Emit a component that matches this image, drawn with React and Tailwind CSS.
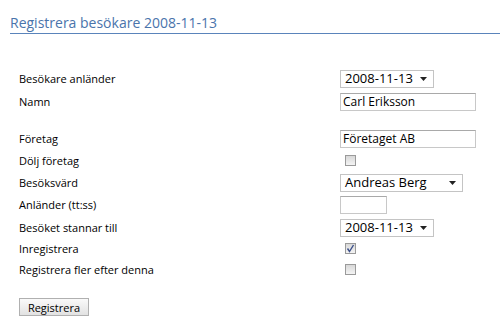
import React from "react";

const font = { fontFamily: '"Open Sans", "Liberation Sans", sans-serif' };

function Arrow() {
  return (
    <svg width="7" height="4" viewBox="0 0 7 4" className="shrink-0">
      <path d="M0 0 H7 L3.5 4 Z" fill="#222" />
    </svg>
  );
}

function Select({ value, w }) {
  return (
    <div className={`h-[18px] ${w} border border-[#c4c4c4] bg-white flex items-center justify-between pl-[4px] pr-[6px] text-[13px] text-black leading-none`}>
      <span>{value}</span>
      <Arrow />
    </div>
  );
}

function Input({ value, w }) {
  return (
    <div className={`h-[18px] ${w} border border-[#c8c8c8] border-t-[#a9a9a9] bg-white flex items-center pl-[2px] text-[12px] text-black leading-none`}>
      {value}
    </div>
  );
}

function Check({ checked }) {
  return (
    <div className="ml-[5px] w-[11px] h-[11px] border border-[#9a9a9a] bg-gradient-to-b from-[#d8d8d8] to-[#f4f4f4] flex items-center justify-center">
      {checked && (
        <svg width="9" height="9" viewBox="0 0 9 9">
          <path d="M1.5 4.5 L3.5 7.5 L7.5 1" stroke="#3b4f8a" strokeWidth="1.4" fill="none" />
        </svg>
      )}
    </div>
  );
}

function Row({ label, children, h, mt }) {
  return (
    <div className={`flex items-center ${h} ${mt}`}>
      <div className="w-[321px] text-[11px] text-black leading-none">{label}</div>
      <div className="flex items-center">{children}</div>
    </div>
  );
}

export default function App() {
  return (
    <div className="w-[500px] h-[330px] bg-white overflow-hidden" style={font}>
      <div className="ml-[10px] pt-[14px] h-[34px] border-b border-[#5a84bb] text-[14px] text-[#4a74ab] leading-[18px]">
        Registrera besökare 2008-11-13
      </div>
      <div className="pl-[19px] pt-[35px]">
        <Row label="Besökare anländer" h="h-[19px]" mt="mt-0">
          <Select value="2008-11-13" w="w-[94px]" />
        </Row>
        <Row label="Namn" h="h-[19px]" mt="mt-[4px]">
          <Input value="Carl Eriksson" w="w-[136px]" />
        </Row>
        <Row label="Företag" h="h-[19px]" mt="mt-[18px]">
          <Input value="Företaget AB" w="w-[136px]" />
        </Row>
        <Row label="Dölj företag" h="h-[19px]" mt="mt-[3px]">
          <Check />
        </Row>
        <Row label="Besöksvärd" h="h-[19px]" mt="mt-[3px]">
          <Select value="Andreas Berg" w="w-[123px]" />
        </Row>
        <Row label="Anländer (tt:ss)" h="h-[19px]" mt="mt-[3px]">
          <Input value="" w="w-[47px]" />
        </Row>
        <Row label="Besöket stannar till" h="h-[19px]" mt="mt-[4px]">
          <Select value="2008-11-13" w="w-[94px]" />
        </Row>
        <Row label="Inregistrera" h="h-[19px]" mt="mt-[2px]">
          <Check checked />
        </Row>
        <Row label="Registrera fler efter denna" h="h-[19px]" mt="mt-[2px]">
          <Check />
        </Row>
        <button className="mt-[19px] w-[70px] h-[18px] border border-[#b0b0b0] bg-gradient-to-b from-[#fafafa] to-[#e2e2e2] text-[11px] text-black leading-none flex items-center justify-center">
          Registrera
        </button>
      </div>
    </div>
  );
}
